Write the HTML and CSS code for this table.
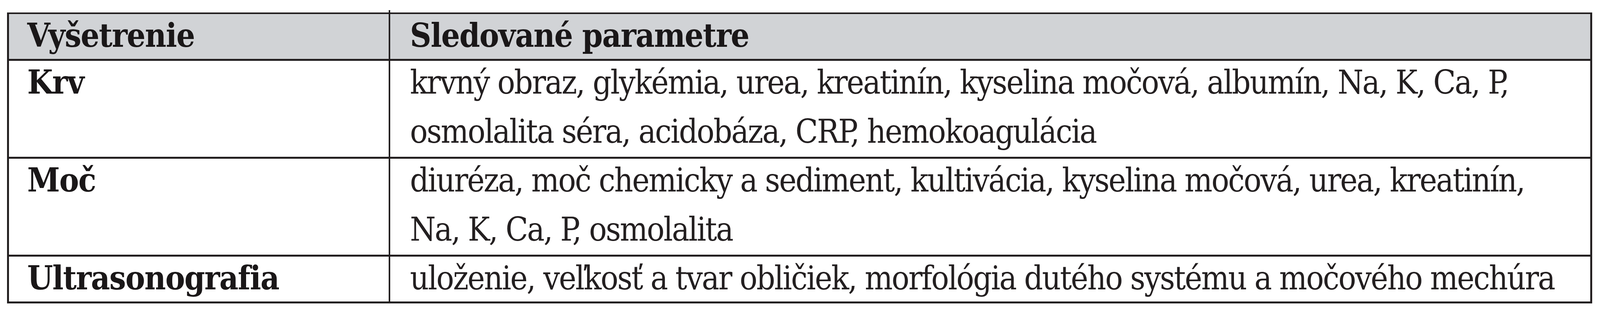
FILE: index.html
```html
<!DOCTYPE html>
<html lang="sk">
<head>
<meta charset="utf-8">
<title>Vyšetrenie – sledované parametre</title>
<link rel="stylesheet" href="styles.css">
</head>
<body>
<div class="tbl">
  <div class="cell c1 head"><span class="line">Vyšetrenie</span></div>
  <div class="cell c2 head"><span class="line">Sledované parametre</span></div>

  <div class="cell c1 name"><span class="line">Krv</span></div>
  <div class="cell c2"><span class="line">krvný obraz, glykémia, urea, kreatinín, kyselina močová, albumín, Na, K, Ca, P,</span><span class="line">osmolalita séra, acidobáza, CRP, hemokoagulácia</span></div>

  <div class="cell c1 name"><span class="line">Moč</span></div>
  <div class="cell c2"><span class="line">diuréza, moč chemicky a sediment, kultivácia, kyselina močová, urea, kreatinín,</span><span class="line">Na, K, Ca, P, osmolalita</span></div>

  <div class="cell c1 name last"><span class="line">Ultrasonografia</span></div>
  <div class="cell c2 last"><span class="line">uloženie, veľkosť a tvar obličiek, morfológia dutého systému a močového mechúra</span></div>
</div>
</body>
</html>
```
FILE: styles.css
```css
html, body {
  margin: 0;
  padding: 0;
  background: #ffffff;
}

body {
  padding: 32px 0 0 0.43vw;
  font-family: "DejaVu Serif Condensed", "DejaVu Serif", "Liberation Serif", serif;
  font-size: 84px;
  letter-spacing: -2.7px;
  color: #231f20;
}

.tbl {
  box-sizing: border-box;
  width: 99.09vw;
  display: grid;
  grid-template-columns: 23.83vw 1fr;
  grid-template-rows: 120px 251px 251px 115px;
  border: 5px solid #231f20;
  border-top-width: 4px;
}

.cell {
  box-sizing: border-box;
  display: flex;
  flex-direction: column;
  gap: 16px;
  border-bottom: 5px solid #231f20;
  padding-left: 1.24vw;
}

.cell.c1 {
  border-right: 4px solid #231f20;
  padding-left: 1.15vw;
}

.cell.last {
  border-bottom: 0;
}

.cell.head {
  background: #d1d3d6;
  position: relative;
}

.cell.head,
.cell.name {
  font-weight: bold;
  letter-spacing: -1.6px;
  color: #1a1718;
}

.cell.head.c1::after {
  content: "";
  position: absolute;
  right: -4px;
  top: -10px;
  width: 4px;
  height: 6px;
  background: #231f20;
}

.line {
  display: block;
  line-height: 110px;
  white-space: nowrap;
}
```
